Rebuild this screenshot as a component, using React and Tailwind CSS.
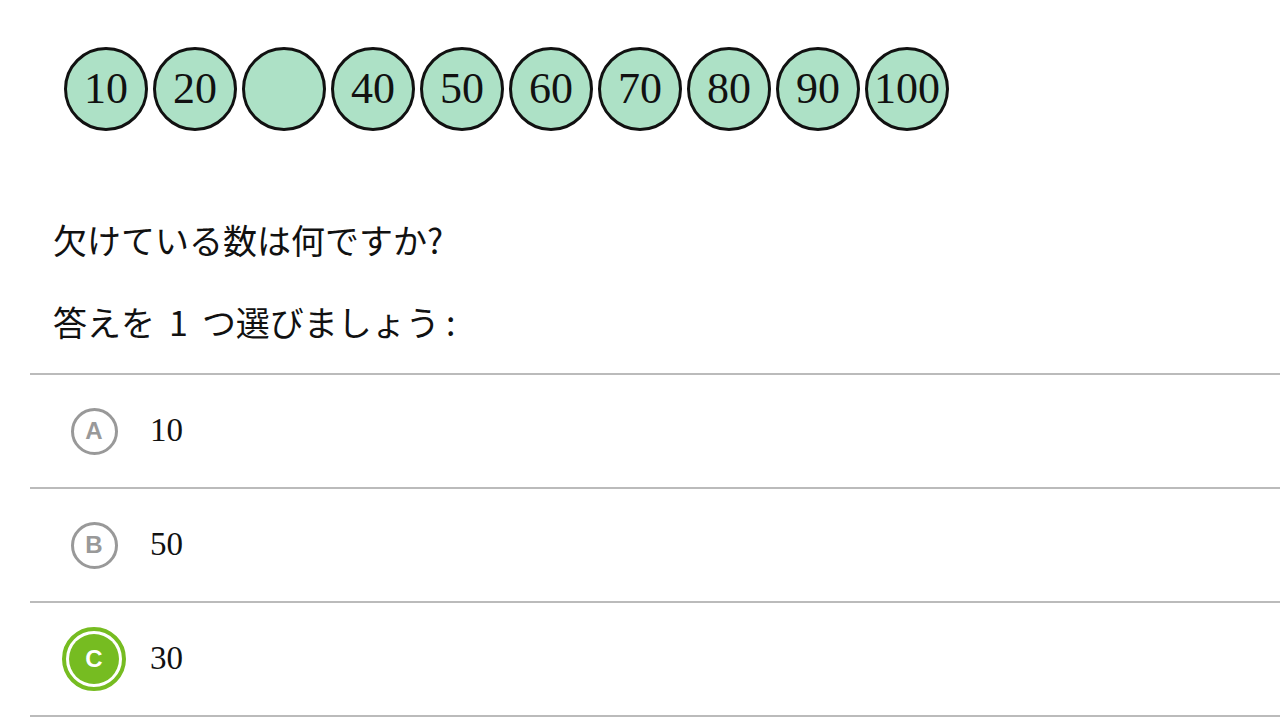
import React from 'react';

const balls = ['10', '20', '', '40', '50', '60', '70', '80', '90', '100'];

const options = [
    { id: 'A', value: '10' },
    { id: 'B', value: '50' },
    { id: 'C', value: '30', selected: true }
];

const jp = { fontFamily: '"Noto Sans CJK JP", "Noto Sans", sans-serif' };
const serif = { fontFamily: '"Liberation Serif", "DejaVu Serif", serif' };
const sans = { fontFamily: '"Liberation Sans", Arial, sans-serif' };

const OptionBadge = ({ id, selected }) => {
    if (selected) {
        return (
            <div className="w-16 h-16 rounded-full border-4 border-[#76bc21] p-[3px] flex">
                <div className="flex-1 rounded-full bg-[#76bc21] flex items-center justify-center text-white font-bold text-[24px] leading-none" style={sans}>
                    {id}
                </div>
            </div>
        );
    }
    return (
        <div className="w-16 h-16 flex items-center justify-center">
            <div className="w-[47px] h-[47px] rounded-full border-[3px] border-[#999999] flex items-center justify-center text-[#999999] font-bold text-[24px] leading-none" style={sans}>
                {id}
            </div>
        </div>
    );
};

export default function App() {
    return (
        <div className="w-[1280px] h-[720px] bg-white overflow-hidden">
            {/* number line */}
            <div className="flex gap-[5px] pl-16 pt-[47px]">
                {balls.map((n, i) => (
                    <div
                        key={i}
                        className="w-[84px] h-[84px] rounded-full border-[3px] border-[#111111] bg-[#ade1c6] flex items-center justify-center text-[44px] leading-none text-[#111111]"
                        style={serif}
                    >
                        {n}
                    </div>
                ))}
            </div>

            <div className="pl-[53px] text-[34px] leading-[40px] text-[#111111]" style={jp}>
                <p className="mt-[89px]">欠けている数は何ですか?</p>
                <p className="mt-[42px]">
                    答えを<span className="mx-[14px]">1</span>つ選びましょう<span className="ml-[6px]">:</span>
                </p>
            </div>

            <div className="ml-[30px] mt-[31px]">
                {options.map((o) => (
                    <div key={o.id} className="h-[114px] border-t-2 border-[#bbbbbb] flex items-center pl-8 last:h-[116px] last:border-b-2">
                        <OptionBadge id={o.id} selected={o.selected} />
                        <span className="ml-6 text-[33px] text-[#111111]" style={serif}>{o.value}</span>
                    </div>
                ))}
            </div>
        </div>
    );
}
